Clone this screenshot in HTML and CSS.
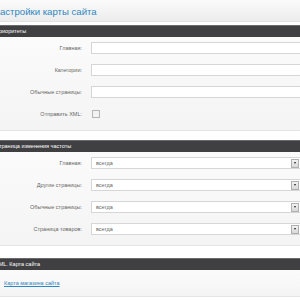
FILE: index.html
```html
<!DOCTYPE html>
<html lang="ru">
<head>
    <meta charset="UTF-8">
    <title>Настройки карты сайта</title>
    <link rel="stylesheet" href="styles.css">
</head>
<body>
<div class="page">
    <div class="title-bar">
        <h1>Настройки карты сайта</h1>
    </div>

    <!-- Priorities -->
    <div class="section">
        <div class="section-head">Приоритеты</div>
        <div class="rows">
            <div class="row">
                <label>Главная:</label>
                <input type="text" class="field">
            </div>
            <div class="row">
                <label>Категории:</label>
                <input type="text" class="field">
            </div>
            <div class="row">
                <label>Обычные страницы:</label>
                <input type="text" class="field">
            </div>
            <div class="row">
                <label>Отправить XML:</label>
                <span class="check"></span>
            </div>
        </div>
    </div>

    <!-- Change frequency -->
    <div class="section">
        <div class="section-head">Страница изменения частоты</div>
        <div class="rows">
            <div class="row">
                <label>Главная:</label>
                <div class="select"><span class="value">всегда</span><span class="arrow"></span></div>
            </div>
            <div class="row">
                <label>Другие страницы:</label>
                <div class="select"><span class="value">всегда</span><span class="arrow"></span></div>
            </div>
            <div class="row">
                <label>Обычные страницы:</label>
                <div class="select"><span class="value">всегда</span><span class="arrow"></span></div>
            </div>
            <div class="row">
                <label>Страница товаров:</label>
                <div class="select"><span class="value">всегда</span><span class="arrow"></span></div>
            </div>
        </div>
    </div>

    <!-- XML map -->
    <div class="section last">
        <div class="section-head">XML. Карта сайта</div>
        <div class="links">
            <a href="#">Карта магазина сайта</a>
        </div>
    </div>
</div>
</body>
</html>
```

FILE: styles.css
```css
body {
    margin: 0;
    background-color: #fff;
    font-family: "Liberation Sans", Arial, sans-serif;
    overflow: hidden;
}
.page {
    width: 320px;
    margin-left: -5px;
}
.title-bar {
    height: 21px;
    background: linear-gradient(#fbfbfb, #ececec);
    border-bottom: 1px solid #e2e2e2;
    display: flex;
    align-items: center;
}
h1 {
    margin: 1px 0 0 -2px;
    font-size: 9.6px;
    font-weight: normal;
    color: #2f86c0;
}
.section {
    margin-top: 3px;
}
.section + .section {
    margin-top: 9px;
}
.section.last {
    margin-top: 12px;
}
.section-head {
    height: 11px;
    line-height: 11px;
    background-color: #404043;
    border-top: 1px solid #6a6a6d;
    color: #fff;
    font-size: 5.5px;
}
.rows {
    background: linear-gradient(#fbfbfb, #f4f4f4);
    padding-bottom: 5px;
    border-bottom: 1px solid #e4e4e4;
}
.row {
    display: grid;
    grid-template-columns: 96px 1fr;
    align-items: center;
    height: 22px;
}
.row label {
    text-align: right;
    padding-right: 9px;
    font-size: 5.5px;
    color: #666;
}
.field {
    box-sizing: border-box;
    width: 230px;
    height: 12px;
    margin: 0;
    padding: 0;
    border: 1px solid #d6d6d6;
    background-color: #fff;
}
.check {
    width: 6px;
    height: 6px;
    border: 1px solid #b5b5b5;
    background-color: #f2f2f2;
    margin-left: 1px;
}
.select {
    box-sizing: border-box;
    width: 210px;
    height: 12px;
    display: flex;
    align-items: center;
    justify-content: space-between;
    border: 1px solid #d6d6d6;
    background-color: #fff;
}
.value {
    font-size: 5.5px;
    color: #666;
    padding-left: 4px;
}
.arrow {
    width: 6px;
    height: 7px;
    margin-right: 1px;
    border: 1px solid #b0b0b0;
    background: linear-gradient(#f2f2f2, #d8d8d8);
    display: flex;
    align-items: center;
    justify-content: center;
}
.arrow::after {
    content: "";
    border-left: 1.5px solid transparent;
    border-right: 1.5px solid transparent;
    border-top: 2px solid #222;
}
.links {
    height: 26px;
    display: flex;
    align-items: center;
    padding-left: 9px;
    background: linear-gradient(#fbfbfb, #f4f4f4);
    border-bottom: 1px solid #e4e4e4;
}
.links a {
    font-size: 5.5px;
    color: #2f86c0;
}
```
